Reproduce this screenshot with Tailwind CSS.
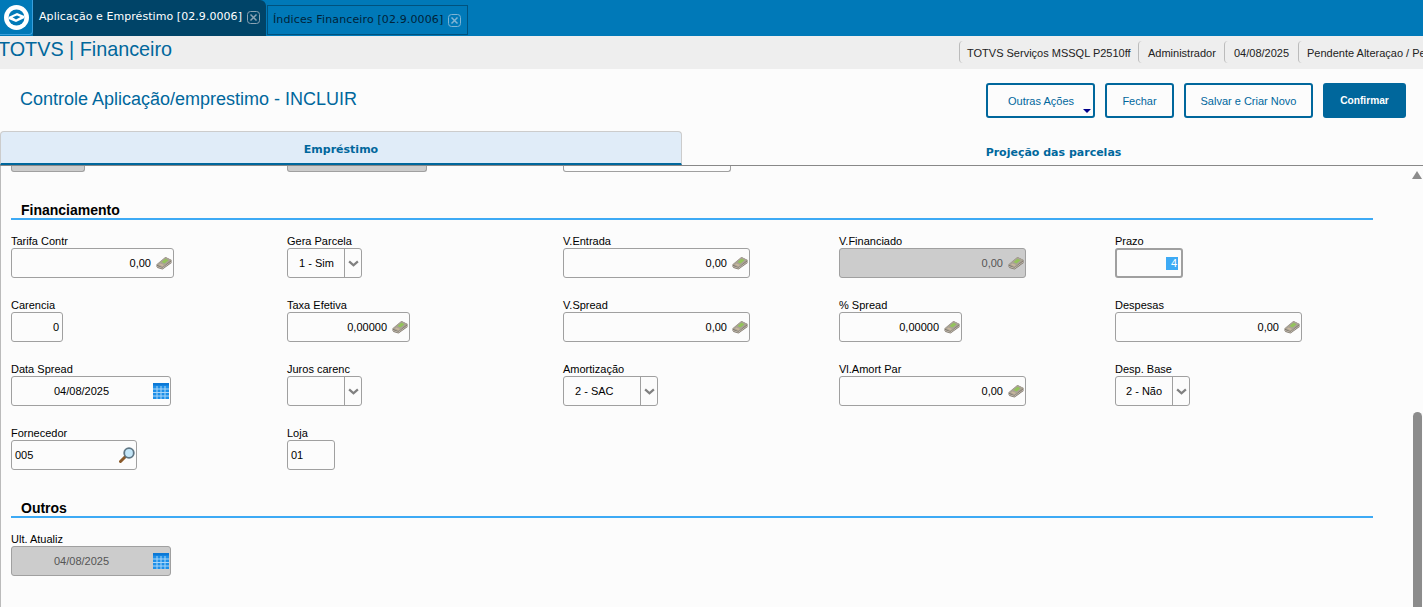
<!DOCTYPE html>
<html>
<head>
    <title>Controle Aplicação/emprestimo</title>
    <script src="https://cdn.jsdelivr.net/npm/@tailwindcss/browser@4"></script>
</head>
<body class="h-[607px] overflow-hidden bg-[#fcfcfc] font-['Liberation_Sans',sans-serif] text-[11px] text-black">
    <!-- icones reutilizados -->
    <svg class="hidden">
        <symbol id="money" viewBox="0 0 16 14">
            <path d="M0.5 8.5 L9.5 1 L15.5 4 L15.5 7 L6.5 13.5 L1.5 12 L0.5 10.5 Z" fill="#7d7468"/>
            <path d="M0.5 8.5 L9.5 1 L15.5 4 L6.5 11.5 Z" fill="#aaa396"/>
            <path d="M5.5 6 L9.5 2.8 L12.5 4.3 L8.5 7.6 Z" fill="#93c45a"/>
            <path d="M3 8.7 L6.5 10.2 L8 9 L4.5 7.5 Z" fill="#c9b79c"/>
            <path d="M1 10.5 L6.5 12.3 L15 6" fill="none" stroke="#dcd8ce" stroke-width="0.7"/>
        </symbol>
        <symbol id="calendar" viewBox="0 0 16 16">
            <rect width="16" height="16" fill="#1e8fe8"/>
            <rect y="0" width="16" height="2.5" fill="#0b78d6"/>
            <path d="M0 6h16M0 9.5h16M0 13h16M4 3v13M8 3v13M12 3v13" stroke="#a9d6f8" stroke-width="1"/>
        </symbol>
        <symbol id="chevron" viewBox="0 0 12 8">
            <path d="M1 1.5 L6 6 L11 1.5" fill="none" stroke="#808080" stroke-width="2.6"/>
        </symbol>
    </svg>

    <!-- barra de abas do sistema -->
    <div class="flex h-9 bg-[#0079b8]">
        <div class="flex h-[35px] w-[33px] items-center justify-center rounded-br-sm border-r border-b border-[#3aa0dc]">
            <svg class="h-[25px] w-[25px]" viewBox="0 0 25 25">
                <circle cx="12.5" cy="12.5" r="12.5" fill="#fff"/>
                <circle cx="12.5" cy="12.5" r="8" fill="#0079b8"/>
                <path d="M4.5 12 L13 8 L20.5 11 L20.5 13 L12 17 L4.5 14 Z" fill="#fff"/>
                <path d="M8.5 12.3 L13 10.4 L16.5 12 L12 14.4 Z" fill="#0079b8"/>
            </svg>
        </div>
        <div class="flex h-9 w-[233px] items-center rounded-tr-md bg-[#004468] pb-[1px] pl-[6px] font-['DejaVu_Sans',sans-serif] text-[11px] tracking-[0.06px] text-white">
            <span class="whitespace-nowrap">Aplicação e Empréstimo [02.9.0006]</span>
            <svg class="ml-[5px] h-[13px] w-[13px] shrink-0" viewBox="0 0 13 13"><rect x="0.5" y="0.5" width="12" height="12" rx="3" fill="none" stroke="#8ba3b3"/><path d="M3.5 3.5 L9.5 9.5 M9.5 3.5 L3.5 9.5" stroke="#8ba3b3" stroke-width="1.5"/></svg>
        </div>
        <div class="mt-[5px] ml-[1px] flex h-[30px] w-[201px] items-center border border-[#00527e] pl-[5px] font-['DejaVu_Sans',sans-serif] text-[11px] tracking-[0.13px] text-[#002338]">
            <span class="whitespace-nowrap">Índices Financeiro [02.9.0006]</span>
            <svg class="ml-[5px] h-[13px] w-[13px] shrink-0" viewBox="0 0 13 13"><rect x="0.5" y="0.5" width="12" height="12" rx="3" fill="none" stroke="#7fb4d4"/><path d="M3.5 3.5 L9.5 9.5 M9.5 3.5 L3.5 9.5" stroke="#7fb4d4" stroke-width="1.5"/></svg>
        </div>
    </div>

    <!-- cabecalho -->
    <div class="flex h-[33px] items-start justify-between overflow-hidden bg-[#eeeeee]">
        <div class="-ml-[2px] text-[19.8px] leading-[27px] text-[#00679c]">TOTVS | Financeiro</div>
        <div class="mt-[5px] flex h-[22px] w-[464px] shrink-0 items-center whitespace-nowrap text-[#222]">
            <div class="flex h-full w-[179px] shrink-0 items-center rounded-l-sm border-l border-[#bbb] pt-[2px] pl-[7px]">TOTVS Serviços MSSQL P2510ff</div>
            <div class="flex h-full w-[86px] shrink-0 items-center rounded-l-sm border-l border-[#bbb] pt-[2px] pl-[9px]">Administrador</div>
            <div class="flex h-full w-[74px] shrink-0 items-center rounded-l-sm border-l border-[#bbb] pt-[2px] pl-[9px]">04/08/2025</div>
            <div class="flex h-full shrink-0 items-center rounded-l-sm border-l border-[#bbb] pt-[2px] pl-[8px]">Pendente Alteraçao / Pendente</div>
        </div>
    </div>

    <!-- titulo e acoes -->
    <div class="flex h-[62px] items-start justify-between pr-[17px] pl-5">
        <h1 class="mt-[18px] text-[18px] leading-[24px] text-[#00679c]">Controle Aplicação/emprestimo - INCLUIR</h1>
        <div class="mt-[14px] flex gap-[10px] text-[#00679c]">
            <button class="relative h-[35px] w-[109px] rounded-[3px] border-2 border-[#00679c] pt-[1px] pl-[1px]">
                Outras Ações
                <span class="absolute right-[2px] bottom-[3px] h-0 w-0 border-x-[4px] border-t-[4px] border-x-transparent border-t-[#00008b]"></span>
            </button>
            <button class="h-[35px] w-[69px] rounded-[3px] border-2 border-[#00679c] pt-[1px]">Fechar</button>
            <button class="h-[35px] w-[129px] rounded-[3px] border-2 border-[#00679c] pt-[1px]">Salvar e Criar Novo</button>
            <button class="h-[35px] w-[83px] rounded-[3px] bg-[#00679c] pt-[1px] text-[10.2px] font-bold text-white">Confirmar</button>
        </div>
    </div>

    <!-- abas da tela -->
    <div class="flex h-[35px] border-b border-[#888] font-['DejaVu_Sans',sans-serif] text-[11px] font-bold text-[#00679c]">
        <div class="flex h-[34px] w-[682px] items-center justify-center rounded-t-sm border-t border-r border-l border-[#ccc] border-b-2 border-b-[#00679c] bg-[#e0ecf8] pt-[6px]">Empréstimo</div>
        <div class="flex flex-1 items-center justify-center pt-[11px] pl-[2px]">Projeção das parcelas</div>
    </div>

    <!-- area com rolagem -->
    <div class="relative h-[441px] overflow-hidden border-l border-[#bbb] pl-[10px]">
        <!-- linha cortada pela rolagem -->
        <div class="grid grid-cols-[276px_276px_276px]">
            <div class="h-[6px] w-[74px] rounded-b-[3px] border-x border-b border-[#a0a0a0] bg-[#cccccc]"></div>
            <div class="h-[6px] w-[140px] rounded-b-[3px] border-x border-b border-[#a0a0a0] bg-[#cccccc]"></div>
            <div class="h-[6px] w-[168px] rounded-b-[3px] border-x border-b border-[#a0a0a0]"></div>
        </div>

        <!-- Financiamento -->
        <div class="mt-[29px] h-[19px] w-[1362px] border-b-2 border-[#3daaf5] pl-[10px] text-[14px] leading-[19px] font-bold">Financiamento</div>
        <div class="mt-[14px] grid grid-cols-[276px_276px_276px_276px_276px] auto-rows-[64px]">
            <div>
                <div class="h-[14px] leading-[14px]">Tarifa Contr</div>
                <div class="flex h-[30px] w-[163px] items-center justify-end rounded-[3px] border border-[#a0a0a0] pr-[1px]">0,00<svg class="ml-[5px] h-[14px] w-[16px]"><use href="#money"/></svg></div>
            </div>
            <div>
                <div class="h-[14px] leading-[14px]">Gera Parcela</div>
                <div class="flex h-[30px] w-[75px] items-center rounded-[3px] border border-[#a0a0a0]"><span class="flex-1 pl-[11px]">1 - Sim</span><span class="flex h-full w-[17px] items-center justify-center border-l border-[#a0a0a0]"><svg class="h-[7px] w-[11px]"><use href="#chevron"/></svg></span></div>
            </div>
            <div>
                <div class="h-[14px] leading-[14px]">V.Entrada</div>
                <div class="flex h-[30px] w-[187px] items-center justify-end rounded-[3px] border border-[#a0a0a0] pr-[1px]">0,00<svg class="ml-[5px] h-[14px] w-[16px]"><use href="#money"/></svg></div>
            </div>
            <div>
                <div class="h-[14px] leading-[14px]">V.Financiado</div>
                <div class="flex h-[30px] w-[187px] items-center justify-end rounded-[3px] border border-[#a0a0a0] bg-[#cccccc] pr-[1px] text-[#555]">0,00<svg class="ml-[5px] h-[14px] w-[16px]"><use href="#money"/></svg></div>
            </div>
            <div>
                <div class="h-[14px] leading-[14px]">Prazo</div>
                <div class="flex h-[30px] w-[68px] items-center justify-end rounded-[3px] border-2 border-[#a0a0a0] pr-[3px]"><span class="w-[12px] bg-[#3daaf5] pr-[1px] text-right leading-[13px] text-white">4</span></div>
            </div>

            <div>
                <div class="h-[14px] leading-[14px]">Carencia</div>
                <div class="flex h-[30px] w-[52px] items-center justify-end rounded-[3px] border border-[#a0a0a0] pr-[3px]">0</div>
            </div>
            <div>
                <div class="h-[14px] leading-[14px]">Taxa Efetiva</div>
                <div class="flex h-[30px] w-[123px] items-center justify-end rounded-[3px] border border-[#a0a0a0] pr-[1px]">0,00000<svg class="ml-[5px] h-[14px] w-[16px]"><use href="#money"/></svg></div>
            </div>
            <div>
                <div class="h-[14px] leading-[14px]">V.Spread</div>
                <div class="flex h-[30px] w-[187px] items-center justify-end rounded-[3px] border border-[#a0a0a0] pr-[1px]">0,00<svg class="ml-[5px] h-[14px] w-[16px]"><use href="#money"/></svg></div>
            </div>
            <div>
                <div class="h-[14px] leading-[14px]">% Spread</div>
                <div class="flex h-[30px] w-[123px] items-center justify-end rounded-[3px] border border-[#a0a0a0] pr-[1px]">0,00000<svg class="ml-[5px] h-[14px] w-[16px]"><use href="#money"/></svg></div>
            </div>
            <div>
                <div class="h-[14px] leading-[14px]">Despesas</div>
                <div class="flex h-[30px] w-[187px] items-center justify-end rounded-[3px] border border-[#a0a0a0] pr-[1px]">0,00<svg class="ml-[5px] h-[14px] w-[16px]"><use href="#money"/></svg></div>
            </div>

            <div>
                <div class="h-[14px] leading-[14px]">Data Spread</div>
                <div class="flex h-[30px] w-[160px] items-center rounded-[3px] border border-[#a0a0a0] pr-[1px]"><span class="flex-1 pl-[42px]">04/08/2025</span><svg class="h-[16px] w-[16px]"><use href="#calendar"/></svg></div>
            </div>
            <div>
                <div class="h-[14px] leading-[14px]">Juros carenc</div>
                <div class="flex h-[30px] w-[75px] items-center rounded-[3px] border border-[#a0a0a0]"><span class="flex-1"></span><span class="flex h-full w-[17px] items-center justify-center border-l border-[#a0a0a0]"><svg class="h-[7px] w-[11px]"><use href="#chevron"/></svg></span></div>
            </div>
            <div>
                <div class="h-[14px] leading-[14px]">Amortização</div>
                <div class="flex h-[30px] w-[95px] items-center rounded-[3px] border border-[#a0a0a0]"><span class="flex-1 pl-[11px]">2 - SAC</span><span class="flex h-full w-[17px] items-center justify-center border-l border-[#a0a0a0]"><svg class="h-[7px] w-[11px]"><use href="#chevron"/></svg></span></div>
            </div>
            <div>
                <div class="h-[14px] leading-[14px]">Vl.Amort Par</div>
                <div class="flex h-[30px] w-[187px] items-center justify-end rounded-[3px] border border-[#a0a0a0] pr-[1px]">0,00<svg class="ml-[5px] h-[14px] w-[16px]"><use href="#money"/></svg></div>
            </div>
            <div>
                <div class="h-[14px] leading-[14px]">Desp. Base</div>
                <div class="flex h-[30px] w-[75px] items-center rounded-[3px] border border-[#a0a0a0]"><span class="flex-1 pl-[10px]">2 - Não</span><span class="flex h-full w-[17px] items-center justify-center border-l border-[#a0a0a0]"><svg class="h-[7px] w-[11px]"><use href="#chevron"/></svg></span></div>
            </div>

            <div>
                <div class="h-[14px] leading-[14px]">Fornecedor</div>
                <div class="flex h-[30px] w-[126px] items-center justify-between rounded-[3px] border border-[#a0a0a0] pr-[1px] pl-[3px]">005
                    <svg class="h-[16px] w-[16px]" viewBox="0 0 16 16"><path d="M6.5 9.5 L1.5 14.5" stroke="#8a5a2a" stroke-width="3" stroke-linecap="round"/><circle cx="10" cy="6" r="4.8" fill="#c4e6f8" stroke="#5f7684" stroke-width="1.8"/></svg>
                </div>
            </div>
            <div>
                <div class="h-[14px] leading-[14px]">Loja</div>
                <div class="flex h-[30px] w-[48px] items-center rounded-[3px] border border-[#a0a0a0] pl-[3px]">01</div>
            </div>
        </div>

        <!-- Outros -->
        <div class="mt-[9px] h-[19px] w-[1362px] border-b-2 border-[#3daaf5] pl-[10px] text-[14px] leading-[19px] font-bold">Outros</div>
        <div class="mt-[14px]">
            <div class="h-[14px] leading-[14px]">Ult. Atualiz</div>
            <div class="flex h-[30px] w-[160px] items-center rounded-[3px] border border-[#a0a0a0] bg-[#cccccc] pr-[1px] text-[#555]"><span class="flex-1 pl-[42px]">04/08/2025</span><svg class="h-[16px] w-[16px]"><use href="#calendar"/></svg></div>
        </div>

        <!-- barra de rolagem -->
        <div class="absolute top-[5px] right-[1px] h-0 w-0 border-x-[5px] border-b-[8px] border-x-transparent border-b-[#8c8c8c]"></div>
        <div class="absolute top-[246px] right-[1px] bottom-0 w-[9px] rounded-t-[5px] bg-[#8c8c8c]"></div>
    </div>
</body>
</html>
